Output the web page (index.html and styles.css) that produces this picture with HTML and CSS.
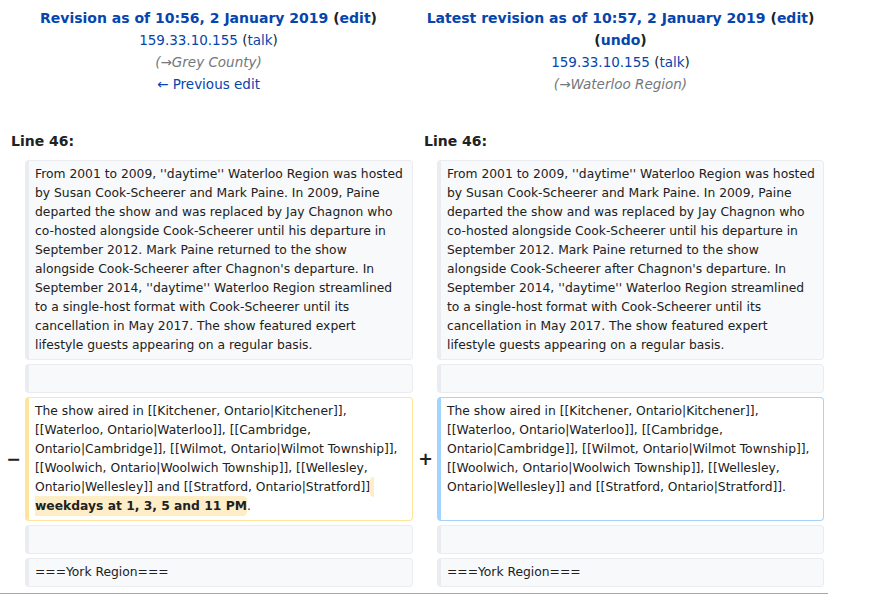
FILE: index.html
```html
<!DOCTYPE html>
<html lang="en">
<head>
<meta charset="utf-8">
<title>Diff</title>
<link rel="stylesheet" href="styles.css">
</head>
<body>
<div class="diff">
  <div class="title">
    <div class="rev"><a href="#">Revision as of 10:56, 2 January 2019</a> <span class="paren">(<a href="#">edit</a>)</span></div>
    <div class="meta"><a href="#">159.33.10.155</a> (<a href="#">talk</a>)</div>
    <div class="meta comment">(→Grey County)</div>
    <div class="meta"><a href="#">← Previous edit</a></div>
  </div>
  <div class="title">
    <div class="rev"><a href="#">Latest revision as of 10:57, 2 January 2019</a> <span class="paren">(<a href="#">edit</a>)</span> <span class="paren">(<a href="#">undo</a>)</span></div>
    <div class="meta"><a href="#">159.33.10.155</a> (<a href="#">talk</a>)</div>
    <div class="meta comment">(→Waterloo Region)</div>
  </div>

  <div class="lineno">Line 46:</div>
  <div class="lineno">Line 46:</div>

  <div class="marker"></div>
  <div class="cell context">From 2001 to 2009, ''daytime'' Waterloo Region was hosted by Susan Cook-Scheerer and Mark Paine. In 2009, Paine departed the show and was replaced by Jay Chagnon who co-hosted alongside Cook-Scheerer until his departure in September 2012. Mark Paine returned to the show alongside Cook-Scheerer after Chagnon's departure. In September 2014, ''daytime'' Waterloo Region streamlined to a single-host format with Cook-Scheerer until its cancellation in May 2017. The show featured expert lifestyle guests appearing on a regular basis.</div>
  <div class="marker"></div>
  <div class="cell context">From 2001 to 2009, ''daytime'' Waterloo Region was hosted by Susan Cook-Scheerer and Mark Paine. In 2009, Paine departed the show and was replaced by Jay Chagnon who co-hosted alongside Cook-Scheerer until his departure in September 2012. Mark Paine returned to the show alongside Cook-Scheerer after Chagnon's departure. In September 2014, ''daytime'' Waterloo Region streamlined to a single-host format with Cook-Scheerer until its cancellation in May 2017. The show featured expert lifestyle guests appearing on a regular basis.</div>

  <div class="marker"></div>
  <div class="cell context empty">&nbsp;</div>
  <div class="marker"></div>
  <div class="cell context empty">&nbsp;</div>

  <div class="marker">−</div>
  <div class="cell deleted">The show aired in [[Kitchener, Ontario|Kitchener]], [[Waterloo, Ontario|Waterloo]], [[Cambridge, Ontario|Cambridge]], [[Wilmot, Ontario|Wilmot Township]], [[Woolwich, Ontario|Woolwich Township]], [[Wellesley, Ontario|Wellesley]] and [[Stratford, Ontario|Stratford]]<del class="change"> weekdays at 1, 3, 5 and 11 PM</del>.</div>
  <div class="marker">+</div>
  <div class="cell added">The show aired in [[Kitchener, Ontario|Kitchener]], [[Waterloo, Ontario|Waterloo]], [[Cambridge, Ontario|Cambridge]], [[Wilmot, Ontario|Wilmot Township]], [[Woolwich, Ontario|Woolwich Township]], [[Wellesley, Ontario|Wellesley]] and [[Stratford, Ontario|Stratford]].</div>

  <div class="marker"></div>
  <div class="cell context empty">&nbsp;</div>
  <div class="marker"></div>
  <div class="cell context empty">&nbsp;</div>

  <div class="marker"></div>
  <div class="cell context">===York Region===</div>
  <div class="marker"></div>
  <div class="cell context">===York Region===</div>
</div>
</body>
</html>
```
FILE: styles.css
```css
html, body {
  margin: 0;
  padding: 0;
  background: #fff;
}
body {
  font-family: "DejaVu Sans", sans-serif;
  color: #202122;
}
a {
  color: #0645ad;
  text-decoration: none;
}
.diff {
  width: 828px;
  box-sizing: border-box;
  padding: 7px 4px 6px 4px;
  display: grid;
  grid-template-columns: 17px 388px 16px 387px;
  column-gap: 4px;
  row-gap: 4px;
  border-bottom: 1px solid #a2a9b1;
}
.title {
  grid-column: span 2;
  text-align: center;
  font-size: 14px;
  line-height: 22px;
}
.rev {
  font-weight: bold;
}
.meta {
  font-size: 13.5px;
}
.comment {
  font-style: italic;
  color: #72777d;
}
.lineno {
  grid-column: span 2;
  font-size: 14px;
  font-weight: bold;
  line-height: 22px;
  padding: 31px 7px 4px 7px;
}
.marker {
  font-size: 17.5px;
  font-weight: bold;
  text-align: right;
  align-self: center;
  line-height: 20px;
}
.cell {
  font-size: 12.32px;
  line-height: 19px;
  padding: 4px 6px 4px 6px;
  border: 1px solid #eaecf0;
  border-left-width: 4px;
  border-radius: 4px;
  white-space: pre-wrap;
  overflow-wrap: break-word;
  color: #202122;
}
.context {
  background: #f8f9fa;
}
.deleted {
  border-color: #ffe49c;
  background: #fff;
}
.added {
  border-color: #a3d3ff;
  background: #fff;
}
.change {
  text-decoration: none;
  font-weight: bold;
  background: #feeec8;
  border-radius: 4px;
  padding: 3px 0;
}
```
